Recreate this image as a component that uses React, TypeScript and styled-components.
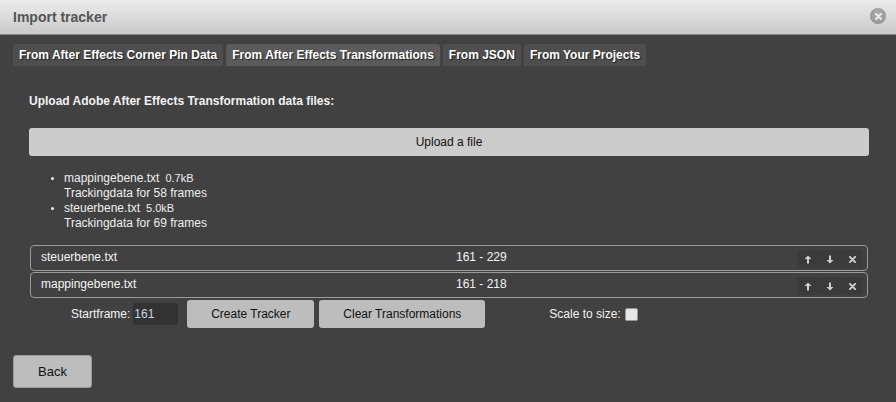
import React from "react";
import styled, { createGlobalStyle } from "styled-components";

const Global = createGlobalStyle`
  html, body { margin: 0; padding: 0; background: #414141; }
  body { font-family: "Liberation Sans", Arial, sans-serif; }
`;

const Dialog = styled.div`
  width: 896px;
  height: 402px;
  background: #414141;
  display: flex;
  flex-direction: column;
  overflow: hidden;
`;

const Header = styled.div`
  height: 35px;
  border-bottom: 1px solid #8a8a8a;
  background: linear-gradient(#ececec, #c9c9c9);
  display: flex;
  align-items: center;
  justify-content: space-between;
  padding: 0 10px 0 13px;
  box-sizing: border-box;
`;

const Title = styled.div`
  font-weight: bold;
  font-size: 14px;
  color: #555;
  margin-top: -1px;
`;

const Close = styled.div`
  width: 16px;
  height: 16px;
  border-radius: 50%;
  background: radial-gradient(circle at 50% 40%, #b0b0b0, #8c8c8c);
  display: flex;
  align-items: center;
  justify-content: center;
  margin-top: -2px;
`;

const Body = styled.div`
  padding: 9px 13px 0 13px;
  display: flex;
  flex-direction: column;
`;

const Tabs = styled.div`
  display: flex;
  gap: 3px;
`;

const Tab = styled.div<{ $active?: boolean }>`
  height: 22px;
  padding: 0 6px;
  display: flex;
  align-items: center;
  font-weight: bold;
  font-size: 12px;
  color: #fff;
  text-shadow: 1px 1px 1px #222;
  border-radius: 3px 3px 0 0;
  background: ${(p) => (p.$active ? "#5b5b5b" : "#4e4e4e")};
`;

const Panel = styled.div`
  padding: 0 14px 0 16px;
  display: flex;
  flex-direction: column;
`;

const Heading = styled.div`
  font-weight: bold;
  font-size: 12px;
  color: #f2f2f2;
  margin-top: 28px;
  height: 14px;
  line-height: 14px;
`;

const UploadButton = styled.div`
  margin-top: 20px;
  height: 28px;
  background: #cccccc;
  border-radius: 3px;
  display: flex;
  align-items: center;
  justify-content: center;
  font-size: 12px;
  color: #111;
`;

const FileList = styled.ul`
  margin: 15px 0 0 0;
  padding: 0 0 0 35px;
  list-style: disc;
  color: #eee;
  font-size: 12px;
  line-height: 15px;
`;

const FileItem = styled.li`
  &::marker { font-size: 10px; }
`;

const Size = styled.span`
  font-size: 11px;
  margin-left: 6px;
`;

const Rows = styled.div`
  margin-top: 14px;
  display: flex;
  flex-direction: column;
  gap: 1px;
  padding-left: 1px;
  padding-right: 1px;
`;

const Row = styled.div`
  height: 26px;
  box-sizing: border-box;
  border: 1px solid #9a9a9a;
  border-radius: 4px;
  display: flex;
  align-items: flex-start;
  padding: 4px 4px 0 10px;
  color: #f4f4f4;
  font-size: 12px;
  line-height: 14px;
`;

const RowName = styled.div`
  width: 415px;
`;

const RowRange = styled.div`
  flex: 1;
`;

const RowButtons = styled.div`
  display: flex;
  margin-top: 0;
`;

const SmallButton = styled.div`
  width: 22px;
  height: 18px;
  background: #3b3b3b;
  border-radius: 3px;
  display: flex;
  align-items: center;
  justify-content: center;
  color: #cfcfcf;
`;

const Controls = styled.div`
  margin-top: 2px;
  display: flex;
  align-items: center;
  padding-left: 42px;
  height: 28px;
`;

const Label = styled.span`
  color: #f2f2f2;
  font-size: 12px;
`;

const NumberBox = styled.div`
  width: 45px;
  height: 22px;
  background: #333;
  border-radius: 2px;
  margin-left: 3px;
  box-sizing: border-box;
  padding-left: 1px;
  display: flex;
  align-items: center;
  color: #c9d4e6;
  font-size: 12px;
`;

const Button = styled.div<{ $w: number; $gap: number }>`
  width: ${(p) => p.$w}px;
  margin-left: ${(p) => p.$gap}px;
  height: 28px;
  background: #bdbdbd;
  border-radius: 3px;
  display: flex;
  align-items: center;
  justify-content: center;
  font-size: 12px;
  color: #111;
  box-sizing: border-box;
`;

const Check = styled.div`
  width: 11px;
  height: 11px;
  background: #e6e6e6;
  border: 1px solid #999;
  border-radius: 2px;
  margin-left: 4px;
`;

const ScaleGroup = styled.div`
  margin-left: 64px;
  display: flex;
  align-items: center;
`;

const BackButton = styled.div`
  margin-top: 27px;
  width: 79px;
  height: 33px;
  background: #bdbdbd;
  border: 1px solid #999;
  border-radius: 3px;
  box-sizing: border-box;
  display: flex;
  align-items: center;
  justify-content: center;
  font-size: 13px;
  color: #111;
`;

const Up = () => (
  <svg width="8" height="9" viewBox="0 0 8 9">
    <path d="M4 0.5 L7.5 4 H5 V8.5 H3 V4 H0.5 Z" fill="#cfcfcf" />
  </svg>
);
const Down = () => (
  <svg width="8" height="9" viewBox="0 0 8 9">
    <path d="M4 8.5 L7.5 5 H5 V0.5 H3 V5 H0.5 Z" fill="#cfcfcf" />
  </svg>
);
const X = ({ c = "#cfcfcf", s = 8 }: { c?: string; s?: number }) => (
  <svg width={s} height={s} viewBox="0 0 8 8">
    <path d="M1 1 L7 7 M7 1 L1 7" stroke={c} strokeWidth="2.2" strokeLinecap="round" />
  </svg>
);

const rows = [
  { name: "steuerbene.txt", range: "161 - 229" },
  { name: "mappingebene.txt", range: "161 - 218" },
];

export default function App() {
  return (
    <Dialog>
      <Global />
      <Header>
        <Title>Import tracker</Title>
        <Close>
          <X c="#eee" s={7} />
        </Close>
      </Header>
      <Body>
        <Tabs>
          <Tab>From After Effects Corner Pin Data</Tab>
          <Tab $active>From After Effects Transformations</Tab>
          <Tab>From JSON</Tab>
          <Tab>From Your Projects</Tab>
        </Tabs>
        <Panel>
          <Heading>Upload Adobe After Effects Transformation data files:</Heading>
          <UploadButton>Upload a file</UploadButton>
          <FileList>
            <FileItem>
              mappingebene.txt<Size>0.7kB</Size>
              <br />
              Trackingdata for 58 frames
            </FileItem>
            <FileItem>
              steuerbene.txt<Size>5.0kB</Size>
              <br />
              Trackingdata for 69 frames
            </FileItem>
          </FileList>
          <Rows>
            {rows.map((r) => (
              <Row key={r.name}>
                <RowName>{r.name}</RowName>
                <RowRange>{r.range}</RowRange>
                <RowButtons>
                  <SmallButton>
                    <Up />
                  </SmallButton>
                  <SmallButton>
                    <Down />
                  </SmallButton>
                  <SmallButton>
                    <X s={7} />
                  </SmallButton>
                </RowButtons>
              </Row>
            ))}
          </Rows>
          <Controls>
            <Label>Startframe:</Label>
            <NumberBox>161</NumberBox>
            <Button $w={127} $gap={9}>Create Tracker</Button>
            <Button $w={166} $gap={5}>Clear Transformations</Button>
            <ScaleGroup>
              <Label>Scale to size:</Label>
              <Check />
            </ScaleGroup>
          </Controls>
        </Panel>
        <BackButton>Back</BackButton>
      </Body>
    </Dialog>
  );
}
